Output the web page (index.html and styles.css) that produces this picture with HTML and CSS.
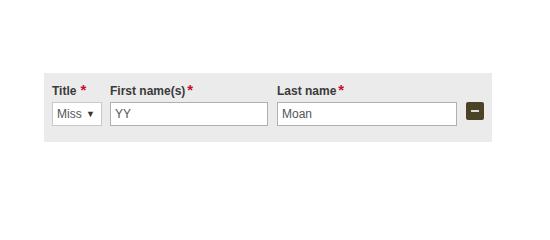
FILE: index.html
```html
<!DOCTYPE html>
<html>
<head>
<meta charset="utf-8">
<link rel="stylesheet" href="styles.css">
</head>
<body>
<div class="panel">
  <div class="field field-title">
    <label class="label">Title<span class="req req-wide">*</span></label>
    <div class="select">
      <span class="select-text">Miss</span>
      <span class="arrow">&#9660;</span>
    </div>
  </div>
  <div class="field field-first">
    <label class="label">First name(s)<span class="req">*</span></label>
    <input class="input" type="text" value="YY">
  </div>
  <div class="field field-last">
    <label class="label">Last name<span class="req">*</span></label>
    <input class="input" type="text" value="Moan">
  </div>
  <button class="remove" type="button" aria-label="Remove"><span class="minus"></span></button>
</div>
</body>
</html>
```

FILE: styles.css
```css
html, body {
  margin: 0;
  padding: 0;
  background: #ffffff;
}
body {
  padding: 73px 0 0 44px;
  font-family: "Liberation Sans", Arial, sans-serif;
}
.panel {
  width: 448px;
  height: 69px;
  box-sizing: border-box;
  background: #ebebeb;
  padding: 8px 0 0 8px;
  display: flex;
  align-items: flex-start;
}
.field {
  display: flex;
  flex-direction: column;
  margin-right: 8px;
}
.field-first { margin-right: 9px; }
.field-last { margin-right: 9px; }
.label {
  font-size: 12px;
  font-weight: bold;
  color: #3a3a3a;
  line-height: 15px;
  height: 15px;
  margin-top: 3px;
  margin-bottom: 3px;
  white-space: nowrap;
}
.req {
  color: #c8102e;
  font-size: 15px;
  line-height: 12px;
  margin-left: 2px;
}
.req-wide {
  margin-left: 4px;
}
.select {
  width: 50px;
  height: 24px;
  box-sizing: border-box;
  border: 1px solid #c9c9c9;
  background: #fff;
  display: flex;
  align-items: center;
  padding-left: 4px;
  font-size: 12px;
  color: #555;
}
.select-text {
  flex: 1;
}
.arrow {
  font-size: 9px;
  color: #333;
  margin-right: 6px;
}
.input {
  height: 24px;
  box-sizing: border-box;
  border: 1px solid #b0b0b0;
  background: #fff;
  padding: 0 4px;
  font-family: "Liberation Sans", Arial, sans-serif;
  font-size: 12px;
  color: #555;
  margin: 0;
  outline: none;
}
.field-first .input { width: 158px; }
.field-last .input { width: 180px; }
.remove {
  margin-top: 21px;
  width: 18px;
  height: 18px;
  padding: 0;
  border: none;
  border-radius: 2px;
  background: #4b4328;
  display: flex;
  align-items: center;
  justify-content: center;
  cursor: pointer;
}
.minus {
  display: block;
  width: 8px;
  height: 2px;
  background: #e0ddd0;
}
```
